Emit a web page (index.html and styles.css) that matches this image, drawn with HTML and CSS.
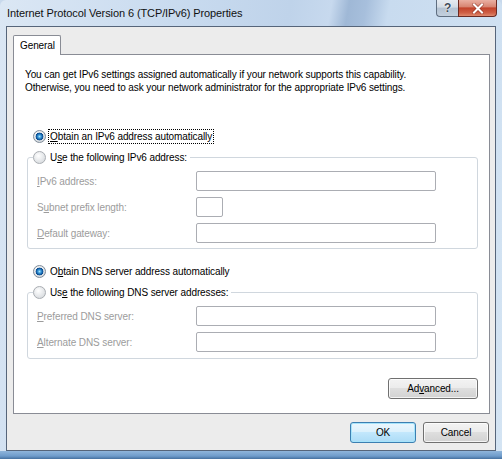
FILE: index.html
```html
<!DOCTYPE html>
<html>
<head>
<meta charset="utf-8">
<title>Internet Protocol Version 6 (TCP/IPv6) Properties</title>
<link rel="stylesheet" href="styles.css">
</head>
<body>
<div class="window">
  <div class="titlebar">
    <span class="title">Internet Protocol Version 6 (TCP/IPv6) Properties</span>
    <div class="caption-btns">
      <div class="cbtn help"><span class="q">?</span></div>
      <div class="cbtn close">
        <svg width="12" height="11" viewBox="0 0 12 11">
          <path d="M2 1.5 L10 9.5 M10 1.5 L2 9.5" stroke="#7a2418" stroke-width="3.6" stroke-linecap="round" fill="none" opacity="0.55"/>
          <path d="M2 1.5 L10 9.5 M10 1.5 L2 9.5" stroke="#ffffff" stroke-width="2" stroke-linecap="square" fill="none"/>
        </svg>
      </div>
    </div>
  </div>
  <div class="client">
    <div class="tabs"><div class="tab">General</div></div>
    <div class="panel">
      <p class="desc">You can get IPv6 settings assigned automatically if your network supports this capability.<br>Otherwise, you need to ask your network administrator for the appropriate IPv6 settings.</p>

      <div class="opt opt1"><span class="radio on"></span><span class="rlabel focus"><u>O</u>btain an IPv6 address automatically</span></div>

      <fieldset class="group g1">
        <legend><span class="radio"></span><span class="rlabel">U<u>s</u>e the following IPv6 address:</span></legend>
        <div class="fields">
          <div class="frow"><span class="flabel"><u>I</u>Pv6 address:</span><span class="input"></span></div>
          <div class="frow"><span class="flabel">S<u>u</u>bnet prefix length:</span><span class="input short"></span></div>
          <div class="frow"><span class="flabel"><u>D</u>efault gateway:</span><span class="input"></span></div>
        </div>
      </fieldset>

      <div class="opt opt3"><span class="radio on"></span><span class="rlabel">O<u>b</u>tain DNS server address automatically</span></div>

      <fieldset class="group g2">
        <legend><span class="radio"></span><span class="rlabel">Us<u>e</u> the following DNS server addresses:</span></legend>
        <div class="fields">
          <div class="frow"><span class="flabel"><u>P</u>referred DNS server:</span><span class="input"></span></div>
          <div class="frow"><span class="flabel"><u>A</u>lternate DNS server:</span><span class="input"></span></div>
        </div>
      </fieldset>

      <div class="adv"><div class="btn adv-btn">Ad<u>v</u>anced...</div></div>
    </div>
    <div class="actions">
      <div class="btn default">OK</div>
      <div class="btn">Cancel</div>
    </div>
  </div>
</div>
</body>
</html>
```

FILE: styles.css
```css
* { box-sizing: border-box; }
html, body { margin: 0; padding: 0; }
body {
  width: 502px;
  height: 459px;
  overflow: hidden;
  font-family: "Liberation Sans", Arial, sans-serif;
  font-size: 10px;
  letter-spacing: -0.1px;
  color: #000;
  background: #c8d9ec;
}

.window {
  width: 502px;
  height: 459px;
  display: flex;
  flex-direction: column;
  border-radius: 6px 6px 0 0;
  background:
    linear-gradient(to top, #45709f 0, #6f9ccb 3px, #8fb5db 8px, transparent 8px),
    linear-gradient(100deg, #dbe7f4 0%, #c9dbef 30%, #bfd3ea 50%, #c7d9ee 57%, #9fb8d6 60%, #a7bfdc 63%, #c8dbef 67%, #d4e4f3 100%);
}

/* title bar */
.titlebar {
  height: 26px;
  display: flex;
  align-items: flex-start;
  padding: 0 5px 0 7px;
}
.title {
  line-height: 26px;
  font-size: 11px;
  letter-spacing: -0.1px;
  color: #111;
}
.caption-btns {
  margin-left: auto;
  display: flex;
}
.cbtn {
  height: 17px;
  display: flex;
  align-items: center;
  justify-content: center;
  border: 1px solid #5f6e80;
  border-top: none;
}
.help {
  width: 22px;
  border-right: none;
  border-radius: 0 0 0 4px;
  background: linear-gradient(#e6ebf1 0, #d3dbe4 45%, #b4c2d2 50%, #c3d0de 100%);
}
.help .q {
  font-weight: bold;
  font-size: 12px;
  color: #3f4b59;
  text-shadow: 0 0 2px #fff, 0 0 1px #fff;
  line-height: 14px;
}
.close {
  width: 39px;
  border-color: #6b2a22;
  border-radius: 0 0 4px 0;
  background: linear-gradient(#eab0a2 0, #d88572 42%, #c2432b 50%, #cf5f45 80%, #e08a6e 100%);
}

/* client area */
.client {
  flex: 1;
  margin: 0 6px 8px;
  border: 1px solid #56657a;
  background: #ececec;
  padding: 8px 5px 7px 6px;
  display: flex;
  flex-direction: column;
}
.tabs { display: flex; }
.tab {
  width: 48px;
  height: 20px;
  border: 1px solid #898c95;
  border-bottom: none;
  border-radius: 2px 2px 0 0;
  background: #fff;
  padding-left: 6px;
  line-height: 19px;
  margin-bottom: -1px;
  position: relative;
  z-index: 1;
}
.panel {
  height: 360px;
  border: 1px solid #898c95;
  background: #fff;
}
.desc {
  margin: 0;
  padding: 13px 0 0 11px;
  line-height: 13px;
}

/* radio options */
.opt {
  display: flex;
  align-items: center;
  height: 15px;
  margin-left: 19px;
}
.opt1 { margin-top: 35px; }
.opt3 { margin-top: 15px; }
.radio {
  flex: none;
  width: 13px;
  height: 13px;
  border-radius: 50%;
  border: 1px solid #a9adb2;
  background: radial-gradient(circle at 40% 35%, #ffffff 0, #e9ebed 45%, #cfd3d7 100%);
}
.radio.on {
  border-color: #7f8c99;
  background:
    radial-gradient(circle at 50% 50%, #a9e6fd 0, #48a3de 1.4px, #1565ad 2.8px, #0b4a8c 3.6px, rgba(11,74,140,0) 4.2px),
    radial-gradient(circle at 40% 35%, #ffffff 0, #e6e9ec 45%, #c7ccd2 100%);
}
.rlabel {
  margin-left: 2px;
  padding: 0 1px;
  border: 1px dotted transparent;
  line-height: 13px;
  white-space: nowrap;
}
.rlabel.focus { border-color: #000; }

/* group boxes */
.group {
  margin: 6px 0 0 13px;
  padding: 0;
  width: 451px;
  min-inline-size: 0;
  border: 1px solid #d0d7de;
  border-radius: 3px;
}
.group legend {
  margin-left: 5px;
  padding: 0 1px 0 0;
  height: 15px;
  display: flex;
  align-items: center;
}
.fields {
  padding: 6px 0 5px 9px;
  display: flex;
  flex-direction: column;
  gap: 6px;
}
.g2 .fields { padding-bottom: 6px; }
.frow {
  display: flex;
  align-items: center;
  height: 20px;
}
.flabel {
  width: 159px;
  color: #9c9c9c;
  white-space: nowrap;
}
.input {
  height: 20px;
  width: 240px;
  border: 1px solid #abadb3;
  border-radius: 2px;
  background: #fff;
}
.input.short { width: 27px; }

/* buttons */
.adv {
  display: flex;
  justify-content: flex-end;
  margin: 19px 11px 0 0;
}
.btn {
  height: 21px;
  display: flex;
  align-items: center;
  justify-content: center;
  border: 1px solid #707070;
  border-radius: 3px;
  background: linear-gradient(#f3f3f3 0, #ececec 45%, #dedede 50%, #d2d2d2 100%);
  box-shadow: inset 0 0 0 1px rgba(255,255,255,0.75);
  white-space: nowrap;
}
.adv-btn { width: 90px; }
.actions {
  display: flex;
  justify-content: flex-end;
  gap: 7px;
  margin-top: 8px;
  padding-right: 1px;
}
.actions .btn { width: 66px; }
.btn.default {
  border-color: #3c7fb1;
  background: linear-gradient(#ecf7fd 0, #dcf1fc 45%, #c2e7fc 50%, #acdcf6 100%);
  box-shadow: inset 0 0 0 1px #a6e4fb;
}
```
